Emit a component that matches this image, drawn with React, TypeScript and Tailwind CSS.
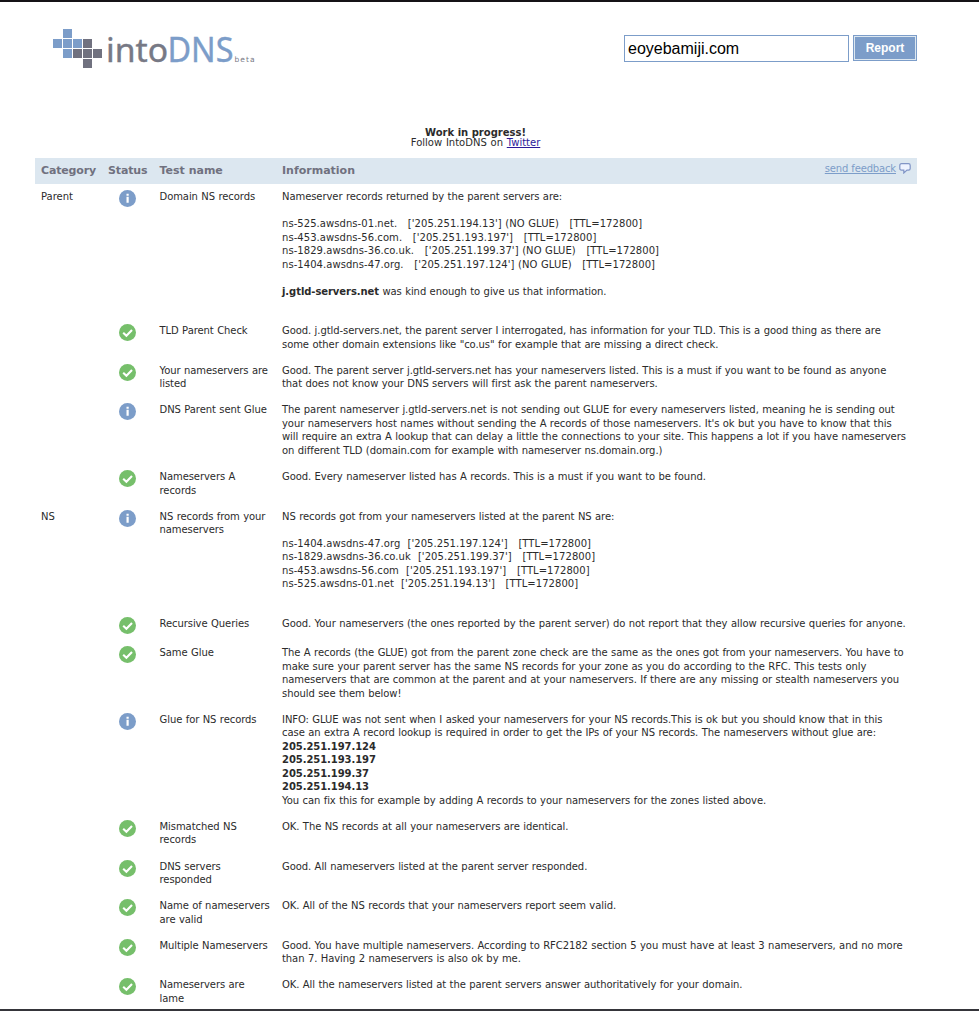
import React from "react";

type Row = {
  category?: string;
  ok: boolean;
  name: string[];
  info: React.ReactNode[];
};

const rows: Row[] = [
  {
    category: "Parent",
    ok: false,
    name: ["Domain NS records"],
    info: [
      "Nameserver records returned by the parent servers are:",
      "",
      "ns-525.awsdns-01.net.   ['205.251.194.13'] (NO GLUE)   [TTL=172800]",
      "ns-453.awsdns-56.com.   ['205.251.193.197']   [TTL=172800]",
      "ns-1829.awsdns-36.co.uk.   ['205.251.199.37'] (NO GLUE)   [TTL=172800]",
      "ns-1404.awsdns-47.org.   ['205.251.197.124'] (NO GLUE)   [TTL=172800]",
      "",
      <><b>j.gtld-servers.net</b> was kind enough to give us that information.</>,
      "",
    ],
  },
  {
    ok: true,
    name: ["TLD Parent Check"],
    info: [
      "Good. j.gtld-servers.net, the parent server I interrogated, has information for your TLD. This is a good thing as there are",
      'some other domain extensions like "co.us" for example that are missing a direct check.',
    ],
  },
  {
    ok: true,
    name: ["Your nameservers are", "listed"],
    info: [
      "Good. The parent server j.gtld-servers.net has your nameservers listed. This is a must if you want to be found as anyone",
      "that does not know your DNS servers will first ask the parent nameservers.",
    ],
  },
  {
    ok: false,
    name: ["DNS Parent sent Glue"],
    info: [
      "The parent nameserver j.gtld-servers.net is not sending out GLUE for every nameservers listed, meaning he is sending out",
      "your nameservers host names without sending the A records of those nameservers. It's ok but you have to know that this",
      "will require an extra A lookup that can delay a little the connections to your site. This happens a lot if you have nameservers",
      "on different TLD (domain.com for example with nameserver ns.domain.org.)",
    ],
  },
  {
    ok: true,
    name: ["Nameservers A", "records"],
    info: ["Good. Every nameserver listed has A records. This is a must if you want to be found."],
  },
  {
    category: "NS",
    ok: false,
    name: ["NS records from your", "nameservers"],
    info: [
      "NS records got from your nameservers listed at the parent NS are:",
      "",
      "ns-1404.awsdns-47.org  ['205.251.197.124']   [TTL=172800]",
      "ns-1829.awsdns-36.co.uk  ['205.251.199.37']   [TTL=172800]",
      "ns-453.awsdns-56.com  ['205.251.193.197']   [TTL=172800]",
      "ns-525.awsdns-01.net  ['205.251.194.13']   [TTL=172800]",
      "",
    ],
  },
  {
    ok: true,
    name: ["Recursive Queries"],
    info: ["Good. Your nameservers (the ones reported by the parent server) do not report that they allow recursive queries for anyone."],
  },
  {
    ok: true,
    name: ["Same Glue"],
    info: [
      "The A records (the GLUE) got from the parent zone check are the same as the ones got from your nameservers. You have to",
      "make sure your parent server has the same NS records for your zone as you do according to the RFC. This tests only",
      "nameservers that are common at the parent and at your nameservers. If there are any missing or stealth nameservers you",
      "should see them below!",
    ],
  },
  {
    ok: false,
    name: ["Glue for NS records"],
    info: [
      "INFO: GLUE was not sent when I asked your nameservers for your NS records.This is ok but you should know that in this",
      "case an extra A record lookup is required in order to get the IPs of your NS records. The nameservers without glue are:",
      <b>205.251.197.124</b>,
      <b>205.251.193.197</b>,
      <b>205.251.199.37</b>,
      <b>205.251.194.13</b>,
      "You can fix this for example by adding A records to your nameservers for the zones listed above.",
    ],
  },
  { ok: true, name: ["Mismatched NS", "records"], info: ["OK. The NS records at all your nameservers are identical."] },
  { ok: true, name: ["DNS servers", "responded"], info: ["Good. All nameservers listed at the parent server responded."] },
  { ok: true, name: ["Name of nameservers", "are valid"], info: ["OK. All of the NS records that your nameservers report seem valid."] },
  {
    ok: true,
    name: ["Multiple Nameservers"],
    info: [
      "Good. You have multiple nameservers. According to RFC2182 section 5 you must have at least 3 nameservers, and no more",
      "than 7. Having 2 nameservers is also ok by me.",
    ],
  },
  { ok: true, name: ["Nameservers are", "lame"], info: ["OK. All the nameservers listed at the parent servers answer authoritatively for your domain."] },
];

function StatusIcon({ ok }: { ok: boolean }) {
  return (
    <svg width="17" height="17" viewBox="0 0 17 17" className="block">
      <circle cx="8.5" cy="8.5" r="8.5" fill={ok ? "#76bf6b" : "#7c9dc9"} />
      {ok ? (
        <path d="M4.2 8.8 7.4 11.8 13 6" fill="none" stroke="#fff" strokeWidth="2.1" />
      ) : (
        <path d="M7.5 3.800h2.200v2h-2.200zM7.500 6.700h2.200v6.100h-2.200z" fill="#fff" />
      )}
    </svg>
  );
}

function Lines({ items }: { items: React.ReactNode[] }) {
  return (
    <>
      {items.map((l, i) => {
        const record = typeof l === "string" && l.startsWith("ns-");
        return (
          <div
            key={i}
            className={
              record
                ? "h-[13.52px] whitespace-pre tracking-[0.06px] [word-spacing:0.3px]"
                : "h-[13.52px] whitespace-pre tracking-[-0.07px] [word-spacing:0.34px]"
            }
          >
            {l}
          </div>
        );
      })}
    </>
  );
}

const blocks: [number, number, boolean][] = [
  [1, 0, true], [0, 1, true], [1, 1, true], [2, 1, true], [3, 1, false],
  [1, 2, true], [2, 2, false], [3, 2, false], [4, 2, false], [3, 3, false],
];

function Logo() {
  return (
    <svg width="210" height="46" viewBox="0 0 210 46" className="block">
      {blocks.map(([x, y, blue]) => (
        <rect key={`${x}-${y}`} x={x * 10} y={1 + y * 10} width="9" height="9" fill={blue ? "#7c9dc9" : "#70717f"} />
      ))}
      <text x="53" y="33.5" fontFamily="'Noto Sans', sans-serif" fontSize="32" fill="#777985" stroke="#777985" strokeWidth="0.4" textLength="62" lengthAdjust="spacingAndGlyphs">into</text>
      <text x="114.500" y="33.500" fontFamily="'Noto Sans', sans-serif" fontSize="34.500" fill="#7c9dc9" stroke="#7c9dc9" strokeWidth="0.400" textLength="66" lengthAdjust="spacingAndGlyphs">DNS</text>
      <text x="181.500" y="34" fontFamily="'DejaVu Sans', sans-serif" fontSize="7.500" fill="#777985" textLength="20">beta</text>
    </svg>
  );
}

export default function App() {
  return (
    <div className="flex h-[1011px] w-[979px] flex-col overflow-hidden border-t-2 border-b-2 border-t-[#151316] border-b-[#35353a] bg-white font-['DejaVu_Sans',sans-serif] text-[10px] leading-[13.52px] text-[#2b2b2b]">
      <header className="flex h-[124px] shrink-0 items-start justify-between pr-[62px] pl-[53px]">
        <div className="pt-[26px]"><Logo /></div>
        <div className="flex gap-1 pt-[33px] font-['Liberation_Sans',sans-serif]">
          <input
            aria-label="Domain"
            defaultValue="eoyebamiji.com"
            className="h-[27px] w-[225px] border border-[#7c9dc9] bg-white px-[3px] text-[16px] text-black outline-none"
          />
          <button className="h-[26px] w-16 border border-[#7c9dc9] bg-[#7c9dc9] pt-[2px] text-[12px] font-bold text-white shadow-[inset_0_0_0_1px_#dce7f0]">
            Report
          </button>
        </div>
      </header>
      <div className="h-8 shrink-0 pr-[28px] text-center leading-[10px]">
        <div className="pt-[2px] font-bold">Work in progress!</div>
        <div className="[word-spacing:0.6px]">Follow IntoDNS on <a className="text-[#2a1a9a] underline">Twitter</a></div>
      </div>
      <div className="ml-[35px] flex h-[26px] w-[882px] shrink-0 items-center bg-[#dce7f0] text-[11px] font-bold tracking-[-0.15px] text-[#70717f]">
        <div className="w-[73px] pl-[6px]">Category</div>
        <div className="w-[51.5px]">Status</div>
        <div className="w-[122.5px] tracking-normal">Test name</div>
        <div className="flex-1 tracking-normal">Information</div>
        <div className="flex items-center gap-[3px] pr-[6px] pb-[5px] text-[10px] font-normal text-[#7c9dc9]">
          <a className="underline">send feedback</a>
          <svg width="12" height="11" viewBox="0 0 12 11" className="shrink-0">
            <path d="M2.500 .7h7q1.700 0 1.700 1.700v3q0 1.700-1.700 1.700H8L4.800 10V7.100H2.500Q.8 7.100 .8 5.400v-3Q.8 .7 2.500 .7Z" fill="#eef3ff" stroke="#8195c6" strokeWidth="1.2" />
          </svg>
        </div>
      </div>
      <main className="ml-[35px] w-[882px]">
        {rows.map((r) => (
          <section key={r.name[0]} className="flex pt-[6.1px] pb-[6.45px]">
            <div className="w-[84px] shrink-0 pl-[6px]">{r.category}</div>
            <div className="w-[40.5px] shrink-0"><StatusIcon ok={r.ok} /></div>
            <div className="w-[122.5px] shrink-0"><Lines items={r.name} /></div>
            <div><Lines items={r.info} /></div>
          </section>
        ))}
      </main>
    </div>
  );
}
